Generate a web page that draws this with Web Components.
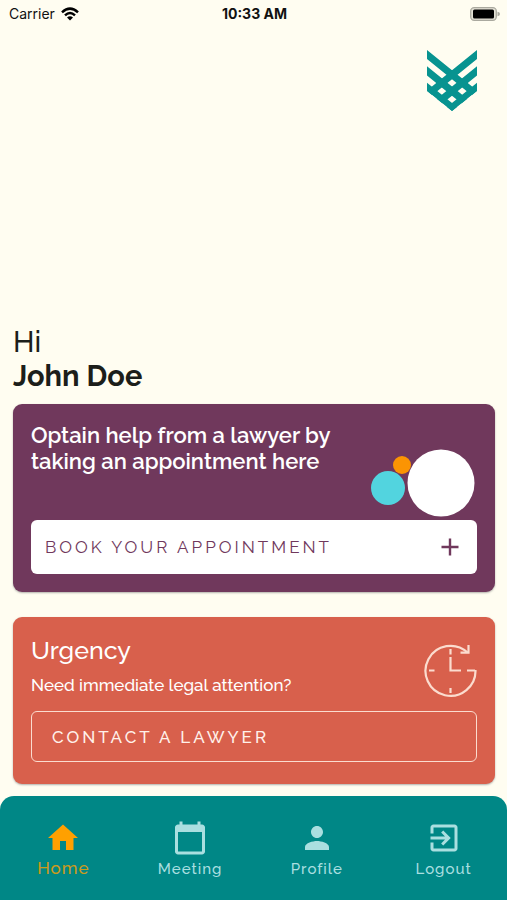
<!DOCTYPE html>
<html lang="en">
<head>
<meta charset="utf-8">
<meta name="viewport" content="width=device-width, initial-scale=1">
<title>Legal help</title>
<style>
  body { margin: 0; background: #fffdf1; color: #1c1e1a; font-family: Raleway, Lato, "Open Sans", sans-serif; }
</style>
</head>
<body>
<legal-app></legal-app>
<script>
const define = (name, html) => customElements.define(name, class extends HTMLElement {
  constructor() {
    super();
    this.attachShadow({ mode: 'open' }).innerHTML = html;
  }
});

define('status-bar', `
<style>
  :host { display: grid; grid-template-columns: 1fr auto 1fr; align-items: center; height: 28px; padding: 0 7px 0 9px; font: 14px/20px Inter, sans-serif; color: #111; }
  .carrier { display: flex; align-items: center; gap: 6px; }
  b { font-weight: 700; }
  .battery { justify-self: end; }
  svg { display: block; }
</style>
<span class="carrier">Carrier
  <svg width="18" height="14" viewBox="0 0 18 14" fill="none" stroke="#000" stroke-width="2.5" aria-label="Wi-Fi">
    <path d="M1 5.3Q9-2 17 5.3M4 8.3Q9 3.7 14 8.3"/><path d="M9 13.5L6 10.4Q9 8 12 10.4Z" fill="#000" stroke="none"/>
  </svg>
</span>
<b>10:33 AM</b>
<svg class="battery" width="30" height="14" viewBox="0 0 30 14" aria-label="Battery full">
  <rect x=".7" y=".7" width="25.6" height="12.6" rx="3.5" fill="#e4e2d6" stroke="#aaa99f" stroke-width="1.3"/>
  <rect x="3" y="2.6" width="21" height="8.8" rx="1.5" fill="#000"/>
  <path d="M27.5 4.8Q30 5.3 30 7T27.5 9.2Z" fill="#aaa99f"/>
</svg>`);

define('brand-logo', `
<style>:host { display: block; } svg { display: block; }</style>
<svg width="50" height="61" viewBox="0 0 49 61" preserveAspectRatio="none" role="img" aria-label="Logo" fill="#079390">
  <clipPath id="shield"><path d="M0 0H49V41L24.5 61 0 41Z"/></clipPath>
  <g clip-path="url(#shield)">
    <path d="M0 0L49 40.5V49.500L0 9ZM0 16.3L49 56.8V66L0 25.4ZM0 32.700L49 73.2V82L0 41Z"/>
    <path d="M49 0L0 40.5V49.500L49 9ZM49 16.3L0 56.8V66L49 25.4ZM49 32.700L0 73.2V82L49 41Z"/>
  </g>
</svg>`);

define('user-greeting', `
<style>
  :host { display: block; }
  h1 { margin: 0; font-size: 29px; line-height: 34px; font-weight: 500; }
  strong { display: block; font-weight: 700; }
</style>
<h1>Hi <strong><slot></slot></strong></h1>`);

define('action-card', `
<style>
  :host { display: block; padding: 18px; border-radius: 9px; background: var(--card); color: #fff; box-shadow: 0 1px 2px #77777790; }
  .top { display: flex; justify-content: space-between; }
  .copy { flex: 1; min-width: 0; }
</style>
<div class="top"><div class="copy"><slot></slot></div><slot name="art"></slot></div>
<slot name="action"></slot>`);

define('bubble-art', `
<style>:host { display: block; align-self: end; padding: 0 2px 3px 0; } svg { display: block; }</style>
<svg width="104" height="68" viewBox="0 0 104 68" aria-hidden="true">
  <circle cx="17" cy="39" r="17" fill="#52d4df"/><circle cx="31" cy="16" r="9" fill="#fb9403"/><circle cx="70" cy="34" r="33.5" fill="#fff"/>
</svg>`);

define('clock-art', `
<style>:host { display: block; padding-top: 9px; } svg { display: block; }</style>
<svg width="53" height="54" viewBox="0 0 53 54" fill="none" stroke="#fbdccf" stroke-width="2.2" aria-hidden="true">
  <path d="M51.5 26A25 25 0 1 1 43.500 8.500"/>
  <path d="M44.500 1V8.700H36.500M26.500 5V10.500M26.500 13V26.500H37M43 26.500H51M5 26.500H10.500M26.500 44V49"/>
</svg>`);

define('wide-button', `
<style>
  :host { display: block; }
  button { display: flex; align-items: center; justify-content: space-between; width: 100%; box-sizing: border-box; margin: 0; font: 400 17px/24px Raleway, Lato, sans-serif; letter-spacing: 3px; text-align: left; border-radius: 6px; cursor: pointer; }
  :host([kind=solid]) button { padding: 15px 18px 15px 14px; border: 0; background: #fff; color: #70385c; }
  :host([kind=outline]) button { padding: 13px 20px 12px; border: 1px solid #fbdccf; background: none; color: #fff1ea; font-weight: 500; }
  svg { display: none; }
  :host([kind=solid]) svg { display: block; }
</style>
<button type="button"><span><slot></slot></span>
<svg width="18" height="18" viewBox="0 0 18 18" stroke="#70385c" stroke-width="2.400" aria-hidden="true"><path d="M9 .500V17.500M.500 9H17.500"/></svg></button>`);

const tabIcons = {
  home: 'M10 20v-6h4v6h5v-8h3L12 3 2 12h3v8z',
  meeting: 'M20 3h-1V1h-2v2H7V1H5v2H4c-1.100 0-2 .9-2 2v16c0 1.100.9 2 2 2h16c1.100 0 2-.9 2-2V5c0-1.100-.9-2-2-2zm0 18H4V8h16v13z',
  profile: 'M12 12c2.210 0 4-1.790 4-4s-1.790-4-4-4-4 1.790-4 4 1.790 4 4 4zm0 2c-2.670 0-8 1.340-8 4v2h16v-2c0-2.660-5.330-4-8-4z',
  logout: 'M10.090 15.590L11.500 17l5-5-5-5-1.410 1.410L12.670 11H3v2h9.670l-2.580 2.590zM19 3H5c-1.110 0-2 .9-2 2v4h2V5h14v14H5v-4H3v4c0 1.100.89 2 2 2h14c1.100 0 2-.9 2-2V5c0-1.100-.9-2-2-2z'
};
customElements.define('tab-item', class extends HTMLElement {
  connectedCallback() {
    const root = this.attachShadow({ mode: 'open' });
    root.innerHTML = `
<style>
  :host { display: block; flex: 1; color: #aadfe0; }
  :host([active]) { color: #ffa000; }
  a { display: flex; flex-direction: column; align-items: center; color: inherit; text-decoration: none; font-size: 15px; line-height: 26px; letter-spacing: 1px; font-weight: 500; }
  :host([active]) a { font-size: 17px; line-height: 24px; }
  :host([active]) span { opacity: .8; }
  svg { display: block; }
</style>
<a href="#${this.getAttribute('icon')}"><svg width="36" height="36" viewBox="0 0 24 24" fill="currentColor" aria-hidden="true"><path d="${tabIcons[this.getAttribute('icon')]}"/></svg><span><slot></slot></span></a>`;
    if (this.hasAttribute('active')) root.querySelector('a').setAttribute('aria-current', 'page');
  }
});

define('tab-bar', `
<style>
  :host { display: block; background: #008786; border-radius: 14px 14px 0 0; }
  nav { display: flex; padding: 24px 0 18px; }
</style>
<nav aria-label="Main"><slot></slot></nav>`);

define('legal-app', `
<style>
  :host { display: flex; flex-direction: column; min-height: 100vh; }
  header { display: flex; justify-content: flex-end; padding: 22px 30px 0; }
  main { flex: 1; display: flex; flex-direction: column; justify-content: flex-end; padding: 24px 12px 12px 13px; }
  user-greeting { margin-bottom: 11px; }
  .book { --card: #70385c; margin-bottom: 25px; }
  .urgent { --card: #d8604c; padding-bottom: 22px; }
  h2, p { margin: 0; }
  .book h2 { font-size: 22px; line-height: 26px; font-weight: 600; min-height: 98px; box-sizing: border-box; }
  .urgent h2 { font-size: 25px; line-height: 30px; font-weight: 500; }
  .urgent p { font-size: 17px; line-height: 24px; padding: 8px 0 14px; font-weight: 500; }
</style>
<status-bar></status-bar>
<header><brand-logo></brand-logo></header>
<main>
  <user-greeting>John Doe</user-greeting>
  <action-card class="book">
    <h2>Optain help from a lawyer by<br>taking an appointment here</h2>
    <bubble-art slot="art"></bubble-art>
    <wide-button slot="action" kind="solid">BOOK YOUR APPOINTMENT</wide-button>
  </action-card>
  <action-card class="urgent">
    <h2>Urgency</h2>
    <p>Need immediate legal attention?</p>
    <clock-art slot="art"></clock-art>
    <wide-button slot="action" kind="outline">CONTACT A LAWYER</wide-button>
  </action-card>
</main>
<tab-bar>
  <tab-item icon="home" active>Home</tab-item>
  <tab-item icon="meeting">Meeting</tab-item>
  <tab-item icon="profile">Profile</tab-item>
  <tab-item icon="logout">Logout</tab-item>
</tab-bar>`);
</script>
</body>
</html>
